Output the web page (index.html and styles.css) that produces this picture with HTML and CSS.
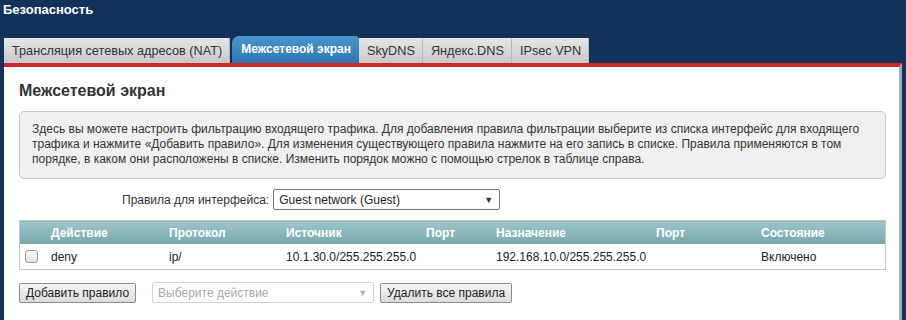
FILE: index.html
```html
<!DOCTYPE html>
<html lang="ru">
<head>
    <meta charset="UTF-8" />
    <title>Безопасность</title>
    <link rel="stylesheet" href="styles.css">
</head>
<body>
<h1 class="page-title">Безопасность</h1>

<nav class="tabs">
    <a class="tab">Трансляция сетевых адресов (NAT)</a>
    <a class="tab tab-active">Межсетевой экран</a>
    <a class="tab">SkyDNS</a>
    <a class="tab">Яндекс.DNS</a>
    <a class="tab">IPsec VPN</a>
</nav>

<main class="panel">
    <h2 class="panel-title">Межсетевой экран</h2>

    <div class="info">
        Здесь вы можете настроить фильтрацию входящего трафика. Для добавления правила фильтрации выберите из списка интерфейс для входящего
        трафика и нажмите «Добавить правило». Для изменения существующего правила нажмите на его запись в списке. Правила применяются в том
        порядке, в каком они расположены в списке. Изменить порядок можно с помощью стрелок в таблице справа.
    </div>

    <div class="iface-row">
        <label class="iface-label">Правила для интерфейса:</label>
        <div class="select select-iface">
            <span>Guest network (Guest)</span>
            <span class="arrow">▼</span>
        </div>
    </div>

    <table class="rules">
        <thead>
        <tr>
            <th class="col-check"></th>
            <th class="col-action">Действие</th>
            <th class="col-proto">Протокол</th>
            <th class="col-src">Источник</th>
            <th class="col-sport">Порт</th>
            <th class="col-dst">Назначение</th>
            <th class="col-dport">Порт</th>
            <th>Состояние</th>
        </tr>
        </thead>
        <tbody>
        <tr>
            <td class="col-check"><span class="checkbox"></span></td>
            <td>deny</td>
            <td>ip/</td>
            <td>10.1.30.0/255.255.255.0</td>
            <td></td>
            <td>192.168.10.0/255.255.255.0</td>
            <td></td>
            <td>Включено</td>
        </tr>
        </tbody>
    </table>

    <div class="actions">
        <button class="btn">Добавить правило</button>
        <div class="select select-disabled">
            <span>Выберите действие</span>
            <span class="arrow">▼</span>
        </div>
        <button class="btn">Удалить все правила</button>
    </div>
</main>
</body>
</html>
```

FILE: styles.css
```css
body {
    margin: 0;
    padding: 0 4px 0 4px;
    background-color: #13325a;
    font-family: "Liberation Sans", Arial, sans-serif;
    font-size: 12px;
    color: #333;
    height: 320px;
    overflow: hidden;
}

.page-title {
    margin: 0 0 0 -1px;
    padding-top: 2px;
    height: 34px;
    font-size: 13px;
    font-weight: bold;
    color: #fff;
}

.tabs {
    display: flex;
    align-items: flex-end;
    height: 27px;
    gap: 2px;
}

.tab {
    display: block;
    height: 25px;
    line-height: 26px;
    padding: 0 7px 0 8px;
    font-size: 12.7px;
    color: #333;
    background: linear-gradient(#e6e6e6, #c9c9c9);
    border-right: 1px solid #b8b8b8;
}

.tab:nth-child(3),
.tab:nth-child(4),
.tab:nth-child(5) {
    margin-left: -2px;
}

.tab-active {
    height: 27px;
    line-height: 26px;
    font-size: 12px;
    font-weight: bold;
    color: #fff;
    background: linear-gradient(#4a95cc, #2f76b0);
    border-right: none;
    border-radius: 7px 4px 0 0;
    padding: 0 8px 0 9px;
}

.panel {
    background-color: #fff;
    border-top: 4px solid #d0272b;
    border-right: 3px solid #a8aab0;
    border-bottom: 3px solid #a8aab0;
    padding: 1px 13px 30px 15px;
}

.panel-title {
    margin: 14px 0 11px 0;
    font-size: 16px;
    font-weight: bold;
    color: #333;
}

.info {
    background-color: #f0f0f0;
    border: 1px solid #c8c8c8;
    border-radius: 5px;
    padding: 10px 12px 11px 12px;
    line-height: 15px;
}

.iface-row {
    display: flex;
    align-items: center;
    margin: 10px 0 10px 103px;
    gap: 4px;
}

.select {
    display: flex;
    justify-content: space-between;
    align-items: center;
    box-sizing: border-box;
    height: 21px;
    padding: 0 6px 0 5px;
    border: 1px solid #767676;
    border-radius: 2px;
    background-color: #fff;
    color: #222;
}

.select-iface {
    width: 227px;
}

.arrow {
    font-size: 9px;
    color: #333;
}

.rules {
    width: 100%;
    border-collapse: collapse;
    border: 1px solid #c8c8c8;
}

.rules th {
    height: 23px;
    padding: 0;
    text-align: left;
    font-weight: bold;
    color: #fff;
    background: linear-gradient(#9dc7ca, #78a6a9);
}

.rules td {
    height: 25px;
    padding: 0;
    color: #222;
}

.col-check {
    width: 31px;
    padding-left: 0;
}

.col-action { width: 118px; }
.col-proto { width: 117px; }
.col-src { width: 140px; }
.col-sport { width: 70px; }
.col-dst { width: 160px; }
.col-dport { width: 105px; }

.checkbox {
    display: block;
    margin-left: 5px;
    width: 11px;
    height: 11px;
    border: 1px solid #9a9a9a;
    border-radius: 3px;
    background: linear-gradient(#fdfdfd, #e2e2e2);
}

.actions {
    display: flex;
    align-items: center;
    margin-top: 12px;
    gap: 6px;
}

.btn {
    height: 20px;
    padding: 0 6px;
    font-family: "Liberation Sans", Arial, sans-serif;
    font-size: 12px;
    color: #222;
    border: 1px solid #8a8a8a;
    border-radius: 2px;
    background: linear-gradient(#f6f6f6, #dcdcdc);
}

.actions .btn:first-child {
    margin-right: 10px;
}

.select-disabled {
    width: 222px;
    border-color: #d4d4d4;
    color: #a8a8a8;
}

.select-disabled .arrow {
    color: #b0b0b0;
}
```
